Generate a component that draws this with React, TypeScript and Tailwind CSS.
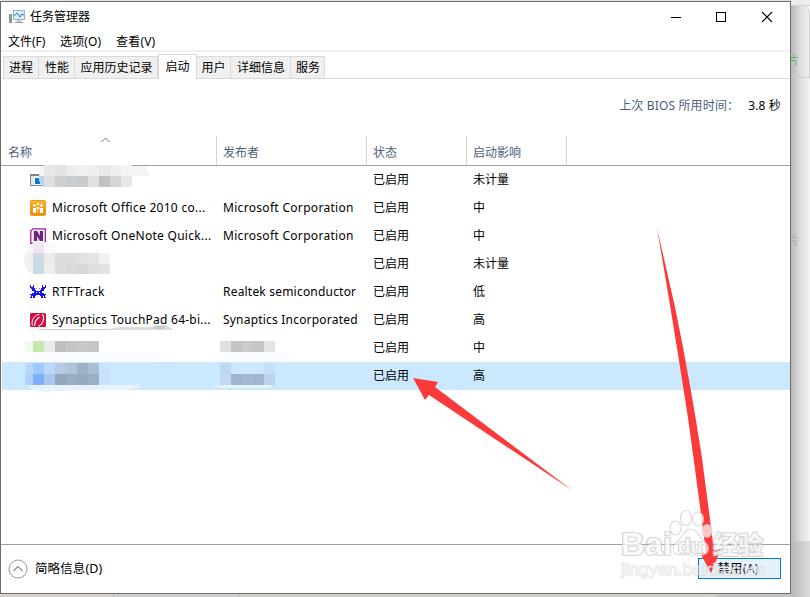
import React from 'react';

const FONT = 'font-["Noto_Sans","Noto_Sans_CJK_SC",sans-serif]';

function TitleIcon() {
  return (
    <svg width="16" height="16" viewBox="0 0 16 16" shapeRendering="crispEdges">
      <rect x="4" y="1" width="12" height="10" fill="#a9afb4" />
      <rect x="5" y="2" width="10" height="8" fill="#d4effb" />
      <path d="M5 7 L8 4 L11 8 L13 5 L15 6" fill="none" stroke="#2580a8" shapeRendering="auto" />
      <rect x="8" y="11" width="4" height="2" fill="#c5c9cc" />
      <rect x="6" y="13" width="8" height="1" fill="#9b9fa2" />
      <rect x="0" y="5" width="3" height="9" fill="#8f9698" />
      <rect x="1" y="6" width="1" height="3" fill="#38e038" />
    </svg>
  );
}

function OfficeIcon() {
  return (
    <svg width="16" height="16" viewBox="0 0 16 16">
      <defs>
        <linearGradient id="office" x2="0" y2="1">
          <stop stopColor="#ffb42b" />
          <stop offset="1" stopColor="#ef8908" />
        </linearGradient>
      </defs>
      <rect x=".5" y=".5" width="15" height="15" rx="1" fill="url(#office)" stroke="#ec9b25" />
      <g fill="#fff">
        <rect x="3" y="8" width="3" height="5" />
        <rect x="6.5" y="7" width="3" height="2" />
        <rect x="7" y="9" width="2" height="4" opacity=".35" />
        <rect x="10" y="8" width="3" height="5" />
        <circle cx="4.5" cy="5.5" r="1.3" />
        <circle cx="8" cy="4" r="1.2" />
        <circle cx="11.5" cy="5.5" r="1.3" />
      </g>
    </svg>
  );
}

function OneNoteIcon() {
  return (
    <svg width="16" height="16" viewBox="0 0 16 16">
      <path d="M3 .8H15.3V15.3H.8V3Z" fill="#fff" stroke="#a21ba2" strokeWidth="1.3" />
      <path d="M4 2.5H12.5V13H2.5V4Z" fill="#e8d3ec" />
      <path d="M4 3H7L10 8V3H13V13H10L7 8V13H4Z" fill="#6d237b" />
    </svg>
  );
}

function RtfIcon() {
  return (
    <svg width="16" height="16" viewBox="0 0 16 16" fill="#1414f0" shapeRendering="crispEdges">
      <path d="M0 1H1V3H3V1H4V4H5V6H6V7H10V6H11V4H12V1H13V3H15V1H16V4H15V5H14V7H12V9H14V10H16V11H15V13H16V14H14V12H13V14H11V12H10V11H6V12H5V14H3V12H2V14H0V13H1V11H0V10H2V9H4V7H2V5H1V4H0Z" />
      <path d="M6 4H7V5H6ZM9 4H10V5H9Z" opacity=".6" />
      <path d="M6 8H7V9H6ZM9 8H10V9H9Z" fill="#fff" />
    </svg>
  );
}

function SynapticsIcon() {
  return (
    <svg width="16" height="16" viewBox="0 0 16 16">
      <rect y="1" width="16" height="14" rx="1.5" fill="#d40f3f" />
      <path d="M2.4 13.5C.8 7.5 5 3.2 9.5 2.2" fill="none" stroke="#fff" strokeWidth="1" />
      <path d="M4.5 14C4.5 10 6.5 7 9.5 5M12.5 2C15 6 13.5 11.5 8.5 14.5" fill="none" stroke="#fff" strokeWidth="1.1" />
    </svg>
  );
}

function WindowIcon() {
  return (
    <svg width="16" height="16" viewBox="0 0 16 16" shapeRendering="crispEdges">
      <rect x="0" y="2" width="16" height="12" fill="#80868b" />
      <rect x="1" y="4" width="14" height="9" fill="#fff" />
      <rect x="1" y="4" width="3" height="9" fill="#e4e6e7" />
      <rect x="5" y="6" width="5" height="6" fill="#0078d7" />
    </svg>
  );
}

const tabs = [
  { label: '进程', cls: 'w-[36px]' },
  { label: '性能', cls: 'w-[36px] pl-px' },
  { label: '应用历史记录', cls: 'w-[83px] pl-px' },
  { label: '启动', cls: 'w-[39px]', active: true },
  { label: '用户', cls: 'w-[34px]' },
  { label: '详细信息', cls: 'w-[60px] pl-px' },
  { label: '服务', cls: 'w-[34px] pl-px' },
];

type Row = {
  icon?: React.ReactNode;
  name?: string;
  nameCls?: string;
  publisher?: string;
  pubCls?: string;
  impact: string;
  selected?: boolean;
};

const rows: Row[] = [
  { icon: <WindowIcon />, impact: '未计量' },
  {
    icon: <OfficeIcon />,
    name: 'Microsoft Office 2010 co...',
    nameCls: 'tracking-[0.28px]',
    publisher: 'Microsoft Corporation',
    pubCls: 'tracking-[0.31px]',
    impact: '中',
  },
  {
    icon: <OneNoteIcon />,
    name: 'Microsoft OneNote Quick...',
    nameCls: 'tracking-[0.28px]',
    publisher: 'Microsoft Corporation',
    pubCls: 'tracking-[0.31px]',
    impact: '中',
  },
  { impact: '未计量' },
  {
    icon: <RtfIcon />,
    name: 'RTFTrack',
    nameCls: 'tracking-[0.35px]',
    publisher: 'Realtek semiconductor',
    pubCls: 'tracking-[0.2px]',
    impact: '低',
  },
  {
    icon: <SynapticsIcon />,
    name: 'Synaptics TouchPad 64-bi...',
    nameCls: 'tracking-[0.24px]',
    publisher: 'Synaptics Incorporated',
    pubCls: 'tracking-[0.2px]',
    impact: '高',
  },
  { impact: '中' },
  { impact: '高', selected: true },
];

// x, y, width, height, colour of every censored block
const blocks: [number, number, number, number, string][] = [
  [44, 165, 11, 11, '#e9e9e9'], [55, 165, 11, 11, '#e3e3e3'], [66, 165, 11, 11, '#ececec'], [77, 165, 11, 11, '#f1f1f1'],
  [88, 165, 11, 11, '#efefef'], [99, 165, 11, 11, '#e9e9e9'], [110, 165, 11, 11, '#eeeeee'], [121, 165, 11, 11, '#f4f4f4'],
  [44, 176, 11, 11, '#dfdfdf'], [55, 176, 11, 11, '#cfcecb'], [66, 176, 11, 11, '#c8ccd4'], [77, 176, 11, 11, '#cccacb'],
  [88, 176, 11, 11, '#e0e0e0'], [99, 176, 11, 11, '#c3c2c1'], [110, 176, 11, 11, '#d5d5d5'], [121, 176, 11, 11, '#e8e8e8'],
  [33, 242, 11, 11, '#f3e6f4'], [44, 242, 11, 11, '#fdf8fd'],
  [33, 253, 11, 11, '#d0d9e0'], [44, 253, 11, 11, '#ebebe9'], [55, 253, 22, 11, '#dddddd'], [77, 253, 11, 11, '#e2e2e3'],
  [88, 253, 11, 11, '#e5e4e5'], [99, 253, 11, 11, '#f2f2f2'],
  [33, 264, 11, 10, '#c9dae8'], [44, 264, 11, 10, '#eeeeec'], [55, 264, 11, 10, '#dddddd'], [66, 264, 11, 10, '#dadada'],
  [77, 264, 11, 10, '#d7d7d8'], [88, 264, 11, 10, '#dedede'], [99, 264, 11, 10, '#e3e3e3'],
  [25, 341, 8, 11, '#effbe9'], [33, 341, 11, 11, '#c5e8ae'], [44, 341, 11, 11, '#ecebe9'], [55, 341, 11, 11, '#bfc0bc'],
  [66, 341, 11, 11, '#c2c4c5'], [77, 341, 11, 11, '#cac7c9'], [88, 341, 11, 11, '#c4c6c8'],
  [33, 363, 11, 11, '#a1c8fc'], [44, 363, 11, 11, '#bbd9f7'], [55, 363, 11, 11, '#b5cae0'], [66, 363, 11, 11, '#afc4d9'],
  [77, 363, 11, 11, '#9cb2c9'], [88, 363, 11, 11, '#a9bfd1'], [99, 363, 11, 22, '#c8e3ff'],
  [25, 374, 8, 11, '#b0d2fd'], [33, 374, 11, 11, '#7fb0fb'], [44, 374, 11, 11, '#a8c8ee'], [55, 374, 11, 11, '#94a8bb'],
  [66, 374, 11, 11, '#9badc1'], [77, 374, 11, 11, '#96aac3'], [88, 374, 11, 11, '#9db0c2'],
  [220, 341, 11, 11, '#e1e0df'], [231, 341, 11, 11, '#c4c4c5'], [242, 341, 11, 11, '#cac9cb'], [253, 341, 11, 11, '#c5c5c8'], [264, 341, 11, 11, '#e4e4e3'],
  [220, 363, 11, 11, '#c0d8ef'], [264, 363, 11, 11, '#c7e0f9'],
  [220, 374, 11, 11, '#c3d9f0'], [231, 374, 11, 11, '#9fb5cc'], [242, 374, 11, 11, '#a3b9d2'], [253, 374, 11, 11, '#a2b7cd'], [264, 374, 11, 11, '#bbd4eb'],
];

function Overlay() {
  return (
    <svg className="pointer-events-none absolute left-0 top-0" width="810" height="597" viewBox="0 0 810 597">
      <path d="M41 166H146L150 176H39Z" fill="#f4f4f4" />
      <path d="M39 176H44V187H43L39 181Z" fill="#b5d3ec" />
      <path d="M33 242V274Q24 270 24 260Q25 250 33 246Z" fill="#f0f0f1" />
      <path d="M27 250L33 243V253H26Z" fill="#faf3fb" />
      <path d="M28 352H172Q168 358 147 362H32Z" fill="#fbfcff" />
      <path d="M208 362Q215 356 225 352H291L286 362Z" fill="#fbfcff" />
      <path d="M27 385H142Q136 390 125 390H80L45 392L33 390Z" fill="#e6f2ff" />
      <path d="M213 385H273L270 388H218Z" fill="#e6f2ff" />
      <path d="M27 363H33V374H25Z" fill="#b8d8fb" />
      {blocks.map(([x, y, w, h, fill], i) => (
        <rect key={i} x={x} y={y} width={w} height={h} fill={fill} shapeRendering="crispEdges" />
      ))}
      <path d="M39 329.5H107" stroke="#e5bfcb" />
      <path d="M107 329L120 327H150L158 325H166L174 330H107Z" fill="#dcdcdc" />
      <path d="M154 326H165V329H154Z" fill="#cacaca" />

      <path d="M413 378L438 382L435 387L572.5 490.5L429 395L425 400Z" fill="#fb3a3a" />
      <path d="M657 228Q664 257 675 307Q690 380 702 458L714 550L721 549L711 572L699 551L706 553Q698 490 688 418Q674 327 657 228Z" fill="none" />
      <path d="M657 228L675 307Q690 380 702 458L714 550L721 549L711 573L699 551L706 553Q698 490 688 418Q674 327 657 228Z" fill="#fb3a3a" />

      <g fill="#fff" fillOpacity=".7" stroke="#cfcfcf" strokeOpacity=".75" strokeWidth="1.2">
        <ellipse cx="675.5" cy="528" rx="5.5" ry="7" />
        <ellipse cx="686" cy="518" rx="5.5" ry="7.5" />
        <ellipse cx="698" cy="519" rx="5.5" ry="7" />
        <ellipse cx="707" cy="531" rx="5" ry="6.5" />
        <path d="M691 529C697 529 699 537 704 541C712 548 708 556 699 555H682C671 555 671 546 678 541C683 537 684 529 691 529Z" />
      </g>
      <g
        className='font-["Liberation_Sans","Noto_Sans_CJK_SC",sans-serif]'
        fill="#fff"
        fillOpacity=".75"
        stroke="#cccccc"
        strokeOpacity=".8"
        strokeWidth="2.2"
        strokeLinejoin="round"
        paintOrder="stroke"
        fontWeight="700"
      >
        <text x="621" y="555" fontSize="32" textLength="51" lengthAdjust="spacingAndGlyphs">Bai</text>
        <text x="678" y="553" fontSize="20" textLength="25" lengthAdjust="spacingAndGlyphs">du</text>
        <text x="713" y="554" fontSize="25" textLength="50">经验</text>
        <text x="621" y="575" fontSize="17" strokeWidth="1.4" strokeOpacity=".5" fillOpacity=".6" fontWeight="400" textLength="144" lengthAdjust="spacingAndGlyphs">
          jingyan.baidu.com
        </text>
      </g>
    </svg>
  );
}

export default function App() {
  return (
    <div className={`relative h-[597px] w-[810px] overflow-hidden bg-[#f1f1f1] text-[12px] leading-[16px] text-black ${FONT}`}>
      <div className="flex h-full">
        <div className="flex h-full w-[791px] flex-col">
          <div className="h-px bg-[#e0e0e0]" />
          <div className="flex h-[593px] flex-col border border-[#6b6b6b] bg-white">
            <header className="flex h-[29px] shrink-0 items-center pl-[8px]">
              <TitleIcon />
              <span className="ml-[5px] flex-1">任务管理器</span>
              <svg width="130" height="28" viewBox="660 2 130 28" fill="none" stroke="#000" shapeRendering="crispEdges">
                <path d="M671 16.5H681" />
                <rect x="716.5" y="11.5" width="9" height="9" />
                <path d="M762 11L772 21M772 11L762 21" shapeRendering="auto" strokeWidth="1.1" />
              </svg>
            </header>
            <nav className="flex h-[21px] shrink-0 items-center gap-[14px] border-b-2 border-[#f0f0f0] pl-[7px] pt-[2px]">
              <span className="w-[38px] whitespace-nowrap">文件(F)</span>
              <span className="w-[42px] whitespace-nowrap tracking-[0.15px]">选项(O)</span>
              <span className="whitespace-nowrap tracking-[0.2px]">查看(V)</span>
            </nav>
            <div className="flex h-[27px] shrink-0 items-end pl-[2px]">
              {tabs.map((t) =>
                t.active ? (
                  <div key={t.label} className={`flex h-[25px] items-center justify-center border border-b-0 border-[#d9d9d9] bg-white pb-px ${t.cls}`}>
                    {t.label}
                  </div>
                ) : (
                  <div key={t.label} className={`flex h-[23px] items-center justify-center border border-l-0 border-[#d9d9d9] bg-[#f0f0f0] pt-px first:border-l ${t.cls}`}>
                    {t.label}
                  </div>
                ),
              )}
              <div className="h-px flex-1 bg-[#d9d9d9]" />
            </div>
            <div className="flex h-[57px] shrink-0 items-center justify-end pr-[9px] pb-[3px]">
              <span className="mr-[8px] w-[121px] whitespace-nowrap tracking-[0.15px] text-[#4c607a]">上次 BIOS 所用时间：</span>
              <span className="whitespace-nowrap tracking-[0.15px]">3.8 秒</span>
            </div>
            <div className="flex h-[30px] shrink-0 border-b border-[#a0a0a0] text-[#4c607a]">
              <div className="relative flex w-[216px] items-end border-r border-[#d5d5d5] pb-[4px] pl-[7px]">
                名称
                <svg className="absolute left-[99px] top-0" width="12" height="8" fill="none" stroke="#667689">
                  <path d="M1.5 6L5.5 2L9.5 6" />
                </svg>
              </div>
              <div className="flex w-[150px] items-end border-r border-[#d5d5d5] pb-[4px] pl-[6px]">发布者</div>
              <div className="flex w-[100px] items-end border-r border-[#d5d5d5] pb-[4px] pl-[6px]">状态</div>
              <div className="flex w-[100px] items-end border-r border-[#d5d5d5] pb-[4px] pl-[6px]">启动影响</div>
            </div>
            <main className="flex-1">
              {rows.map((r, i) => (
                <div key={i} className={`ml-px flex h-[28px] items-center ${r.selected ? 'bg-[#cce8ff]' : ''}`}>
                  <div className="flex w-[221px] items-center pl-[28px]">
                    <span className="mr-[6px] h-[16px] w-[16px]">{r.icon}</span>
                    <span className={`whitespace-nowrap ${r.nameCls ?? ''}`}>{r.name}</span>
                  </div>
                  <div className={`w-[150px] whitespace-nowrap ${r.pubCls ?? ''}`}>{r.publisher}</div>
                  <div className="w-[100px]">已启用</div>
                  <div>{r.impact}</div>
                </div>
              ))}
            </main>
            <footer className="flex h-[49px] shrink-0 items-center border-t border-[#a0a0a0] pb-px pl-[7px] pr-[9px]">
              <svg width="20" height="20" viewBox="0 0 20 20" fill="none" stroke="#979797">
                <circle cx="10" cy="10" r="9" />
                <path d="M5.5 12L10 7.5L14.5 12" strokeWidth="1.4" />
              </svg>
              <span className="ml-[7px] flex-1 text-[12.5px] tracking-[0.1px]">简略信息(D)</span>
              <button className="h-[21px] w-[83px] border border-[#0078d7] bg-[#e5f1fb] pr-[3px] text-[12.5px] leading-[18px] tracking-[0.2px]">禁用(A)</button>
            </footer>
          </div>
          <div className="flex h-[3px]">
            <div className="w-[114px] border-r border-[#bbb] bg-[#d6d4cd]" />
            <div className="w-[125px] border-r border-[#bbb] bg-[#d0d0d3]" />
            <div className="flex-1 bg-[#d3d2c9]" />
            <div className="w-[75px] bg-[#c5c5c5]" />
          </div>
        </div>
        <aside className="flex w-[19px] flex-col bg-gradient-to-r from-[#b8b8b8] via-[#dedede] to-[#f4f4f4]">
          <div className="h-[6px] border-b border-[#d2d2d2] bg-[#ededed]" />
          <div className="flex h-[72px] items-end overflow-hidden rounded-tr-lg border-b border-r border-[#cccccc] pb-[8px] text-[#62b95c]">
            <span className="-ml-[4px]">片</span>
          </div>
          <div className="flex h-[171px] items-end overflow-hidden text-[#b5aaa8]">
            <span className="-ml-[4px]">片</span>
          </div>
          <div className="flex-1" />
          <div className="h-[56px] bg-gradient-to-r from-[#b9b9b9] to-[#dcdcdc]" />
        </aside>
      </div>
      <Overlay />
    </div>
  );
}
